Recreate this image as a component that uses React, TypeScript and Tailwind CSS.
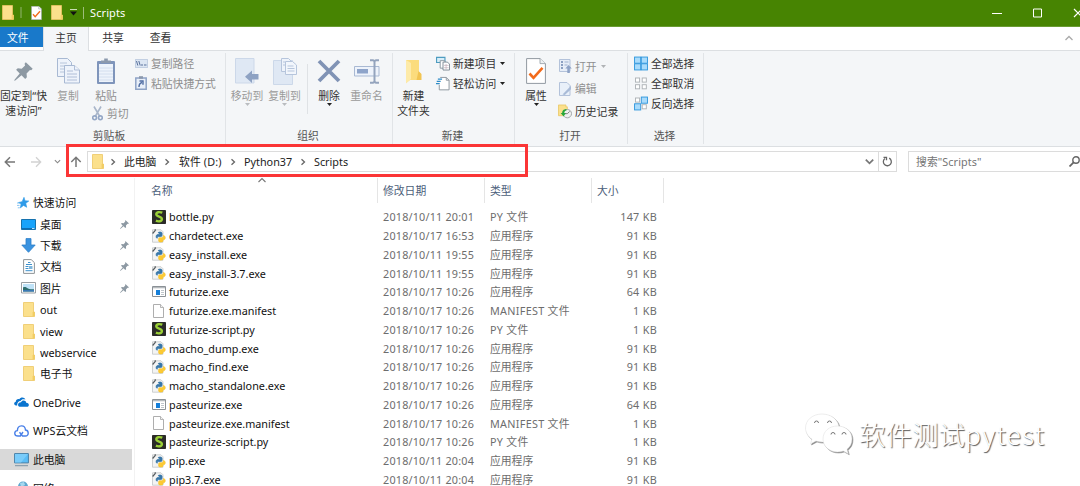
import React from 'react';

type FileKind = 'sublime' | 'python' | 'app' | 'blank';

interface FileRow {
  name: string;
  date: string;
  type: string;
  size: string;
  kind: FileKind;
}

const FILES: FileRow[] = [
  { name: 'bottle.py', date: '2018/10/11 20:01', type: 'PY 文件', size: '147 KB', kind: 'sublime' },
  { name: 'chardetect.exe', date: '2018/10/17 16:53', type: '应用程序', size: '91 KB', kind: 'python' },
  { name: 'easy_install.exe', date: '2018/10/11 19:55', type: '应用程序', size: '91 KB', kind: 'python' },
  { name: 'easy_install-3.7.exe', date: '2018/10/11 19:55', type: '应用程序', size: '91 KB', kind: 'python' },
  { name: 'futurize.exe', date: '2018/10/17 10:26', type: '应用程序', size: '64 KB', kind: 'app' },
  { name: 'futurize.exe.manifest', date: '2018/10/17 10:26', type: 'MANIFEST 文件', size: '1 KB', kind: 'blank' },
  { name: 'futurize-script.py', date: '2018/10/17 10:26', type: 'PY 文件', size: '1 KB', kind: 'sublime' },
  { name: 'macho_dump.exe', date: '2018/10/17 10:26', type: '应用程序', size: '91 KB', kind: 'python' },
  { name: 'macho_find.exe', date: '2018/10/17 10:26', type: '应用程序', size: '91 KB', kind: 'python' },
  { name: 'macho_standalone.exe', date: '2018/10/17 10:26', type: '应用程序', size: '91 KB', kind: 'python' },
  { name: 'pasteurize.exe', date: '2018/10/17 10:26', type: '应用程序', size: '64 KB', kind: 'app' },
  { name: 'pasteurize.exe.manifest', date: '2018/10/17 10:26', type: 'MANIFEST 文件', size: '1 KB', kind: 'blank' },
  { name: 'pasteurize-script.py', date: '2018/10/17 10:26', type: 'PY 文件', size: '1 KB', kind: 'sublime' },
  { name: 'pip.exe', date: '2018/10/11 20:04', type: '应用程序', size: '91 KB', kind: 'python' },
  { name: 'pip3.7.exe', date: '2018/10/11 20:04', type: '应用程序', size: '91 KB', kind: 'python' },
];

/* ---------- icons ---------- */

const Folder: React.FC<{ className?: string }> = ({ className = 'w-[12px] h-[15px]' }) => (
  <svg className={className} viewBox="0 0 12 15" preserveAspectRatio="none">
    <path d="M.5.5h10v9.5h1v4.5H.5z" fill="#fbe08c" stroke="#ecc765" strokeWidth=".8" />
    <path d="M9.6 10h2v4.2h-2z" fill="#f2cd62" />
  </svg>
);

const PinShape: React.FC<{ className: string }> = ({ className }) => (
  <svg className={className} viewBox="0 0 18 18" fill="#8d99a3">
    <path d="M11.2.3l6.5 6.2-1.4 1.3-1.2-.3-3.2 3.4.3 3.6-1.6 1.5-3.5-3.5L1.2 17.6.2 17.8.5 16.7 5.4 11 2 7.4l1.6-1.4 3.7.3 3.2-3.1-.5-1.5z" />
  </svg>
);

const Caret: React.FC<{ color?: string }> = ({ color = '#222' }) => (
  <svg className="w-[5px] h-[3px]" viewBox="0 0 5 3">
    <path d="M0 0h5L2.5 3z" fill={color} />
  </svg>
);

const Chevron: React.FC<{ className: string; d: string; color?: string; width?: number }> = ({ className, d, color = '#666', width = 1.3 }) => (
  <svg className={className} viewBox="0 0 8 8" fill="none" stroke={color} strokeWidth={width}>
    <path d={d} />
  </svg>
);

const PagesIcon = () => (
  <svg className="w-[23px] h-[26px]" viewBox="0 0 23 26" fill="#eef3fb" stroke="#a8b9d3">
    <path d="M.5.5h10l4 4v14h-14z" />
    <path d="M3 5h7M3 8h8M3 11h5M3 14h5" strokeWidth=".8" />
    <path d="M7.5 7.5h10l5 4.5v13h-15z" />
    <path d="M17.5 7.5v4.5h5M10 13h6M10 16h10M10 19h10M10 22h10" strokeWidth=".9" />
  </svg>
);

const ClipboardIcon = () => (
  <svg className="w-[20px] h-[27px]" viewBox="0 0 20 27">
    <rect x="1" y="3" width="18" height="23" rx="1" fill="#7f95bb" />
    <path d="M3 6h14v18H3z" fill="#edf3fb" />
    <path d="M3 10h14M3 13h14M3 16h14M3 19h14M3 22h14" stroke="#d3deee" />
    <path d="M5 5V2.5h3.2V.6h3.6v1.9H15V5z" fill="#8b99ad" />
  </svg>
);

const ScissorsIcon = () => (
  <svg className="w-[11px] h-[15px]" viewBox="0 0 11 15" fill="none" stroke="#94a7c6" strokeWidth="1.6">
    <path d="M2 .5l5.5 9.5M9 .5L3.5 10" stroke="#a9b6ca" />
    <circle cx="2.6" cy="11.8" r="1.9" />
    <circle cx="8.4" cy="11.8" r="1.9" />
  </svg>
);

const PathIcon = () => (
  <svg className="w-[13px] h-[9px]" viewBox="0 0 13 9">
    <path d="M.4.4h12.2v8.2H.4z" fill="#dce6f3" stroke="#b4c3da" strokeWidth=".8" />
    <path d="M1.5 2l1.3 4.5M3.8 2l1.4 4.5M6 6h2M9 6h2.5" stroke="#58709b" strokeWidth="1" fill="none" />
  </svg>
);

const ShortcutIcon = () => (
  <svg className="w-[12px] h-[14px]" viewBox="0 0 12 14">
    <path d="M.8 2h10.4v11.2H.8z" fill="#e8eff9" stroke="#8ea3c6" strokeWidth="1.5" />
    <path d="M4 .2h4v2.5H4z" fill="#8b99ad" />
    <path d="M4 11c0-3 1-4 3-4.5M4.5 5H8v3.8" stroke="#4f6da3" strokeWidth="1.4" fill="none" />
  </svg>
);

const MoveToIcon = () => (
  <svg className="w-[24px] h-[26px]" viewBox="0 0 24 26">
    <path d="M.5.5h18.5v24.5H.5z" fill="#dfe8f4" stroke="#ccd8e9" />
    <path d="M23.5 16v5.5H17V25l-7-6.2 7-6.3V16z" fill="#8ea2c3" />
  </svg>
);

const CopyToIcon = () => (
  <svg className="w-[24px] h-[27px]" viewBox="0 0 24 27" stroke="#b6c5dc">
    <path d="M.5 2.5h19v24H.5z" fill="#dfe8f4" stroke="#ccd8e9" />
    <path d="M8.5.5h7l3 3v10h-10z" fill="#eef3fb" />
    <path d="M12.5 3.5h7l4 3.5v9.5h-11z" fill="#f2f6fc" />
    <path d="M14.5 8h6M14.5 10.5h7M14.5 13h7M10 4h2M10 7h2" />
  </svg>
);

const DeleteIcon = () => (
  <svg className="w-[24px] h-[24px]" viewBox="0 0 24 24" fill="none" stroke="#8093b5" strokeWidth="3.8">
    <path d="M2 2l20 20M22 2L2 22" />
  </svg>
);

const RenameIcon = () => (
  <svg className="w-[26px] h-[25px]" viewBox="0 0 26 25">
    <path d="M.5 7.5h24.5v9.5H.5z" fill="#eef3fb" stroke="#a9b9d3" />
    <path d="M3 10h11v4.5H3z" fill="#8ea4ca" />
    <path d="M16 1.2h3l1.5 1 1.5-1h3M16 23.8h3l1.5-1 1.5 1h3M20.5 2v21" stroke="#94a4bd" strokeWidth="2" fill="none" />
  </svg>
);

const NewFolderIcon = () => (
  <svg className="w-[17px] h-[25px]" viewBox="0 0 17 25">
    <path d="M1 1h13v12l2 2v6H5L1 24z" fill="#fbdc7d" />
    <path d="M1 1l5 3v16l-5 4.5z" fill="#fdeaa8" />
    <path d="M13.5 12l3 3v6h-5z" fill="#f1c452" />
  </svg>
);

const NewItemIcon = () => (
  <svg className="w-[15px] h-[15px]" viewBox="0 0 15 15">
    <path d="M.6.9h9v5.5h-9z" fill="#d7eef9" stroke="#4d9cc0" strokeWidth="1.2" />
    <path d="M4.5 4.5h5v8h-5z" fill="#fff" stroke="#89949e" />
    <path d="M7.5 6h4.500l2.500 2v6.500h-7z" fill="#fff" stroke="#7e8a94" />
    <path d="M8.5 9.5h5M8.5 12h5M10.8 8v6" stroke="#c0a9b4" strokeWidth=".7" />
  </svg>
);

const EasyAccessIcon = () => (
  <svg className="w-[15px] h-[15px]" viewBox="0 0 15 15">
    <path d="M4.5 1h6.5l3 3v10.3H3.5V9" fill="#fff" stroke="#8b959d" />
    <path d="M11 1v3h3" fill="none" stroke="#8b959d" />
    <path d="M2 2.8h4.5M.8 5.2H5M0 7.6h4" stroke="#2e8cc7" strokeWidth="1.4" />
  </svg>
);

const PropertiesIcon: React.FC<{ className?: string }> = ({ className = 'w-[20px] h-[26px]' }) => (
  <svg className={className} viewBox="0 0 20 26">
    <path d="M.6.6h13.4l5.4 5v19.8H.6z" fill="#fff" stroke="#9199a1" />
    <path d="M14 .6v5h5.4" fill="#edf0f2" stroke="#9199a1" strokeWidth=".8" />
    <path d="M3.5 15.5l4 4.3 9-10" fill="none" stroke="#f26a1b" strokeWidth="2.6" />
  </svg>
);

const OpenIcon = () => (
  <svg className="w-[13px] h-[14px]" viewBox="0 0 13 14">
    <path d="M.5.5h10.5v12H.5z" fill="#e6edf7" stroke="#b3c2da" />
    <path d="M2 3h2M2 6h2M2 9h2" stroke="#6d86b1" strokeWidth="1.5" />
    <path d="M5.5 3h4M5.5 6h3" stroke="#9fb1cf" />
    <path d="M9.5 6l3.3 3.6h-2V14H8.3V9.6h-2z" fill="#8da2c6" />
  </svg>
);

const EditIcon = () => (
  <svg className="w-[13px] h-[14px]" viewBox="0 0 13 14">
    <path d="M.5.5H8l3 3v10H.5z" fill="#e9f0f9" stroke="#b3c2da" />
    <path d="M3.5 12.5l8.5-8.8v3.5L5.8 13z" fill="#a9bbd7" />
  </svg>
);

const HistoryIcon = () => (
  <svg className="w-[15px] h-[15px]" viewBox="0 0 15 15">
    <path d="M.5.5h8v2H10v9.5H.5z" fill="#fbe08c" stroke="#e7c45e" strokeWidth=".8" />
    <circle cx="10" cy="9.8" r="4.5" fill="#eef0f0" stroke="#9da3a5" />
    <path d="M7.5 9.8H10L12.5 7.5" fill="none" stroke="#666" strokeWidth=".9" />
    <path d="M9 4.8C5.500 5 4.500 7 4.500 9H2.800L6 12.800 8.500 9H6.800c0-1.500.7-2.500 2.200-2.600z" fill="#27a83b" />
  </svg>
);

const SelectIcon: React.FC<{ mode: 'all' | 'none' | 'invert' }> = ({ mode }) => {
  const cells = [
    { x: 0.6, y: 0.6, on: mode === 'all' },
    { x: 7.8, y: 0.6, on: mode !== 'none' },
    { x: 0.6, y: 7.8, on: mode !== 'none' },
    { x: 7.8, y: 7.8, on: mode === 'all' },
  ];
  return (
    <svg className="w-[15px] h-[15px]" viewBox="0 0 15 15">
      {cells.map((c, i) => c.on
        ? <rect key={i} x={c.x} y={c.y} width="6.6" height="6.6" fill="#a9dbfb" stroke="#3096dc" />
        : <rect key={i} x={c.x + 1} y={c.y + 1} width="4.4" height="4.4" fill="#fff" stroke="#adb2b6" />)}
    </svg>
  );
};

const FileIcon: React.FC<{ kind: FileKind }> = ({ kind }) => {
  if (kind === 'sublime') {
    return (
      <svg className="w-[14px] h-[14px]" viewBox="0 0 14 14">
        <rect width="14" height="14" rx=".8" fill="#2b2b28" />
        <path d="M10.3 2.7C7.5 1.6 4.3 2 4.3 4.3c0 2.7 5.6 2 5.6 4.7 0 2.6-3.5 2.8-6 1.7" fill="none" stroke="#9bd037" strokeWidth="2.4" />
      </svg>
    );
  }
  if (kind === 'app') {
    return (
      <svg className="w-[14px] h-[11px]" viewBox="0 0 14 11">
        <path d="M.5.5h13v10H.5z" fill="#fff" stroke="#8b9196" />
        <path d="M1 1h12v1.3H1z" fill="#b5babd" />
        <path d="M4 4h4v5H4z" fill="#157fd9" />
        <path d="M9 4.5h3M9 6.5h3M9 8.5h3" stroke="#b0b8be" strokeWidth=".8" />
      </svg>
    );
  }
  if (kind === 'blank') {
    return (
      <svg className="w-[11px] h-[14px]" viewBox="0 0 11 14">
        <path d="M.5.5h7l3 3v10H.5z" fill="#fff" stroke="#a5a5a5" strokeWidth=".9" />
        <path d="M7.5.5v3h3" fill="#f2f2f2" stroke="#a5a5a5" strokeWidth=".8" />
      </svg>
    );
  }
  return (
    <svg className="w-[14px] h-[14px]" viewBox="0 0 14 14">
      <path d="M.5.8h8.500l2 2v10.400H.5z" fill="#f3f4f4" stroke="#c2c5c7" strokeWidth=".8" />
      <path d="M.6 4.5L3.8.9M2.6 1.2l1.4-.4" stroke="#545a5e" strokeWidth="1.2" />
      <path d="M6 4c0-1.3 4-1.3 4 0v2.2c0 1.2-1 1.4-2 1.4H6.7C5.5 7.6 5.2 8.3 5.2 9.2c-1.4 0-1.5-3.3.3-3.6h2.7" fill="#3776a8" stroke="#3776a8" strokeWidth=".8" />
      <path d="M11.3 6.5c2.6 0 2.5 4.2.5 4.2H9.5c1.5.2 1.5.4 1.5 1.2 0 1.6-4.4 1.6-4.4 0V10c0-1.2.8-1.3 1.7-1.3h1.5c1.2 0 1.5-.9 1.5-2.2z" fill="#fdcb35" stroke="#f6c22a" strokeWidth=".6" />
    </svg>
  );
};

const StarIcon = () => (
  <svg className="w-[12px] h-[12px]" viewBox="0 0 12 12">
    <path d="M7 .3l1 3.5 3.8.2-3 2.3.9 4-3.2-1.9-3.2 2.5.8-3.9L1.4 5.5l3.7-.8z" fill="#2f9be8" stroke="#2f9be8" strokeWidth=".6" />
    <path d="M0 6h2.5M0 8.4h2.5M.8 10.8h2" stroke="#7cc0f0" strokeWidth=".9" />
  </svg>
);

const DesktopIcon = () => (
  <svg className="w-[15px] h-[11px]" viewBox="0 0 15 11">
    <path d="M.5.5h14v10H.5z" fill="#18a3fb" stroke="#1672ae" />
    <path d="M1 9.5h13" stroke="#0d6db4" />
    <path d="M11 9.5h2.5" stroke="#bde3fb" />
  </svg>
);

const DownloadIcon = () => (
  <svg className="w-[15px] h-[15px]" viewBox="0 0 15 15">
    <path d="M5 .6h5v6.4h4.2L7.5 14.3.8 7H5z" fill="#3a93e0" stroke="#2c7fc8" strokeWidth=".8" />
  </svg>
);

const DocumentIcon = () => (
  <svg className="w-[12px] h-[15px]" viewBox="0 0 12 15">
    <path d="M.6.6h7.6l3.2 3v10.8H.6z" fill="#fff" stroke="#8f9498" />
    <path d="M5 3.5h2.5M3 5.5h6M2.5 7.5h3M2.5 9.5h3M2.5 11.7h7" stroke="#3d91cc" />
    <path d="M6 7h3.5v3H6z" fill="#7fb6dc" />
  </svg>
);

const PictureIcon = () => (
  <svg className="w-[15px] h-[12px]" viewBox="0 0 15 12">
    <path d="M.5.5h14v10.5H.5z" fill="#fff" stroke="#9a9fa3" />
    <path d="M2 2h11v7.5H2z" fill="#bfe2f7" />
    <path d="M2 5.5c2-1 3.5 0 5 1s4 .5 6 .8v2.2H2z" fill="#2e6e6d" />
    <path d="M2 8h11v1.5H2z" fill="#3b78b5" />
  </svg>
);

const OneDriveIcon = () => (
  <svg className="w-[15px] h-[10px]" viewBox="0 0 15 10" fill="#0a74cf">
    <path d="M3.2 8.5H2C-.5 8-.3 5 1.8 4.7 1.8 2.5 4 1.6 5.3 2.3 6.5-.2 10.5-.2 11.4 2.6 8.8 1.8 7.4 2.6 6.6 3.9 4.2 3.9 3 6 3.2 8.5z" />
    <path d="M5.6 9.7C3.2 9.4 3.5 5.3 7 5.3 8 2.7 12 3 12.2 5.8 15.6 5.7 15.5 9.7 13 9.7z" />
  </svg>
);

const WpsCloudIcon = () => (
  <svg className="w-[15px] h-[12px]" viewBox="0 0 15 12" fill="none" stroke="#4a80e8" strokeWidth="1.4">
    <path d="M4 11C-.2 11-.2 6 3.4 5.6 3.6-.5 11-.7 11.5 5 15 5.2 15.2 11 11.5 11H8.5L5.5 7.2" />
    <path d="M4 11h2.3L9 7" />
  </svg>
);

const ComputerIcon = () => (
  <svg className="w-[15px] h-[14px]" viewBox="0 0 15 14">
    <path d="M.6.6h13.8v9.3H.6z" fill="#5bbdf6" stroke="#477fa6" />
    <path d="M1 1h13L7 9.5H1z" fill="#7accfa" />
    <path d="M1 12.6h13" stroke="#8da0ae" strokeWidth="1.3" />
  </svg>
);

const NetworkIcon = () => (
  <svg className="w-[15px] h-[14px]" viewBox="0 0 15 14">
    <circle cx="9" cy="5.5" r="5" fill="#5fa8cf" />
    <path d="M6 2l4-1 1 3-4 2z" fill="#a6d8ef" />
    <path d="M1 7h8v6H1z" fill="#59baf4" stroke="#477fa6" />
  </svg>
);

/* ---------- ribbon ---------- */

const BigButton: React.FC<{ icon: React.ReactNode; lines: string[]; className: string; caret?: string }> = ({ icon, lines, className, caret }) => (
  <div className={`flex shrink-0 flex-col items-center ${className}`}>
    <div className="mt-[5px] mb-[2px] flex h-[30px] items-center">{icon}</div>
    {lines.map(line => <span key={line} className="leading-[15px]">{line}</span>)}
    {caret && <Caret color={caret} />}
  </div>
);

const SmallButton: React.FC<{ icon: React.ReactNode; label: string; className?: string; caret?: string }> = ({ icon, label, className = 'h-[20px]', caret }) => (
  <div className={`flex items-center gap-[3px] ${className}`}>
    <span className="flex w-[14px] shrink-0 justify-center">{icon}</span>
    <span>{label}</span>
    {caret && <span className="ml-px"><Caret color={caret} /></span>}
  </div>
);

const RibbonGroup: React.FC<{ label: string; className: string; labelClass?: string; children: React.ReactNode }> = ({ label, className, labelClass = '', children }) => (
  <div className={`flex shrink-0 flex-col ${className}`}>
    <div className="flex h-[76px]">{children}</div>
    <div className={`mt-[1px] text-center leading-[16px] text-[#555] ${labelClass}`}>{label}</div>
  </div>
);

const Divider = () => <div className="mt-[2px] h-[91px] w-px shrink-0 bg-[#e1e4e7]" />;

const Ribbon = () => (
  <div className="flex h-[96px] shrink-0 border-b border-[#dcdfe2] bg-[#f4f6f8] text-[#333]">
    <RibbonGroup label="剪贴板" className="w-[225px]" labelClass="pr-[7px]">
      <BigButton icon={<PinShape className="h-[19px] w-[19px]" />} lines={['固定到“快', '速访问”']} className="w-[47px] whitespace-nowrap" />
      <BigButton icon={<PagesIcon />} lines={['复制']} className="ml-px w-[40px] text-[#9a9a9a]" />
      <div className="flex flex-col text-[#8f8f8f]">
        <div className="flex h-[53px]">
          <BigButton icon={<ClipboardIcon />} lines={['粘贴']} className="w-[36px]" />
          <div className="ml-[10px] pt-[2px]">
            <SmallButton icon={<PathIcon />} label="复制路径" />
            <SmallButton icon={<ShortcutIcon />} label="粘贴快捷方式" />
          </div>
        </div>
        <SmallButton icon={<ScissorsIcon />} label="剪切" className="ml-[2px] h-[18px]" />
      </div>
    </RibbonGroup>
    <Divider />
    <RibbonGroup label="组织" className="w-[166px]" labelClass="pr-[2px]">
      <BigButton icon={<MoveToIcon />} lines={['移动到']} className="ml-[2px] w-[38px] text-[#9a9a9a]" caret="#b9bcbf" />
      <BigButton icon={<CopyToIcon />} lines={['复制到']} className="w-[37px] text-[#9a9a9a]" caret="#b9bcbf" />
      <div className="mt-[13px] ml-[4px] h-[50px] w-px bg-[#dfe2e5]" />
      <BigButton icon={<DeleteIcon />} lines={['删除']} className="ml-[2px] w-[38px]" caret="#222" />
      <BigButton icon={<RenameIcon />} lines={['重命名']} className="w-[37px] text-[#9a9a9a]" />
    </RibbonGroup>
    <Divider />
    <RibbonGroup label="新建" className="w-[121px]" labelClass="pr-[2px]">
      <BigButton icon={<NewFolderIcon />} lines={['新建', '文件夹']} className="ml-[2px] w-[37px]" />
      <div className="ml-[4px] pt-[2px]">
        <SmallButton icon={<NewItemIcon />} label="新建项目" caret="#222" />
        <SmallButton icon={<EasyAccessIcon />} label="轻松访问" caret="#222" />
      </div>
    </RibbonGroup>
    <Divider />
    <RibbonGroup label="打开" className="w-[112px]" labelClass="pr-[2px]">
      <BigButton icon={<PropertiesIcon />} lines={['属性']} className="ml-[2px] w-[38px]" caret="#222" />
      <div className="ml-[3px] pt-[4px]">
        <SmallButton icon={<OpenIcon />} label="打开" className="h-[22.5px] text-[#8f8f8f]" caret="#b0b3b6" />
        <SmallButton icon={<EditIcon />} label="编辑" className="h-[22.5px] text-[#8f8f8f]" />
        <SmallButton icon={<HistoryIcon />} label="历史记录" className="h-[22.5px]" />
      </div>
    </RibbonGroup>
    <Divider />
    <RibbonGroup label="选择" className="w-[75px]" labelClass="pr-[2px]">
      <div className="ml-[6px] pt-[2px]">
        <SmallButton icon={<SelectIcon mode="all" />} label="全部选择" />
        <SmallButton icon={<SelectIcon mode="none" />} label="全部取消" />
        <SmallButton icon={<SelectIcon mode="invert" />} label="反向选择" />
      </div>
    </RibbonGroup>
    <Divider />
  </div>
);

/* ---------- title, tabs, address ---------- */

const TitleBar = () => (
  <div className="flex h-[27px] shrink-0 items-center border-b border-[#6a9c34] bg-[#478402] pb-px text-white">
    <Folder className="ml-[2px] h-[15px] w-[12px]" />
    <div className="ml-[6px] h-[11px] w-[2px] bg-[#6c9c38]" />
    <PropertiesIcon className="ml-[9px] h-[14px] w-[11px]" />
    <Folder className="ml-[9px] h-[15px] w-[12px]" />
    <svg className="ml-[7px] h-[7px] w-[7px]" viewBox="0 0 7 7">
      <path d="M0 .5h7" stroke="#c9dcb3" />
      <path d="M0 2.5h7L3.5 6.5z" fill="#111" />
    </svg>
    <div className="ml-[6px] h-[12px] w-px bg-[#9dbd7b]" />
    <span className="ml-[6px] text-[11px] tracking-[0.1px]">Scripts</span>
    <svg className="ml-auto h-[10px] w-[88px] shrink-0" viewBox="0 0 88 10" fill="none" stroke="#fff">
      <path d="M0 5.5h10" strokeWidth="1" />
      <path d="M41.5 1h8v8h-8z" />
      <path d="M82 1l8 8M90 1l-8 8" strokeWidth="1.2" />
    </svg>
  </div>
);

const Tabs = () => (
  <div className="flex h-[24px] shrink-0 border-b border-[#dcdfe2] bg-white text-[#333]">
    <div className="flex h-[20px] w-[43px] items-center bg-[#1979ca] pl-[7px] text-white">文件</div>
    <div className="-mb-px flex h-[24px] w-[46px] justify-center border-x border-[#dcdfe2] bg-[#f4f6f8] pt-[3px] leading-[16px]">主页</div>
    <div className="w-[48px] pt-[3px] text-center leading-[16px]">共享</div>
    <div className="w-[47px] pt-[3px] text-center leading-[16px]">查看</div>
    <Chevron className="mt-[7px] mr-[7px] ml-auto h-[8px] w-[8px]" d="M.5 6L4 2.5 7.5 6" color="#aaa" />
  </div>
);

const ARROW = 'M11 6H1.5M6 1.3L1.3 6 6 10.7';

const Crumb = () => <Chevron className="h-[8px] w-[8px] shrink-0" d="M2.5 1.2L5.5 4 2.5 6.8" />;

const AddressBar = () => (
  <div className="flex h-[31px] shrink-0 items-center bg-white pb-[2px] text-[#222]">
    <svg className="ml-[4px] h-[12px] w-[12px]" viewBox="0 0 12 12" fill="none" stroke="#777" strokeWidth="1.5"><path d={ARROW} /></svg>
    <svg className="ml-[14px] h-[12px] w-[12px] rotate-180" viewBox="0 0 12 12" fill="none" stroke="#d2d2d2" strokeWidth="1.3"><path d={ARROW} /></svg>
    <Chevron className="ml-[12px] h-[7px] w-[7px]" d="M1 2.5L4 5.5 7 2.5" color="#888" />
    <svg className="ml-[9px] h-[12px] w-[12px] rotate-90" viewBox="0 0 12 12" fill="none" stroke="#777" strokeWidth="1.5"><path d={ARROW} /></svg>
    <div className="ml-[5px] flex h-[21px] w-[810px] shrink-0 items-center border border-[#dcdcdc] pl-[4px]">
      <Folder />
      <span className="ml-[5px] flex"><Crumb /></span>
      <span className="ml-[7px] w-[33px] whitespace-nowrap">此电脑</span>
      <span className="ml-[6px] flex"><Crumb /></span>
      <span className="ml-[8px] w-[44px] tracking-[0.15px] whitespace-nowrap">软件 (D:)</span>
      <span className="ml-[6px] flex"><Crumb /></span>
      <span className="ml-[7px] w-[48px] whitespace-nowrap">Python37</span>
      <span className="ml-[7px] flex"><Crumb /></span>
      <span className="ml-[7px]">Scripts</span>
      <Chevron className="mr-[4px] ml-auto h-[9px] w-[9px]" d="M.7 2.3L4 5.7 7.3 2.3" width={1.5} color="#777" />
      <div className="flex h-[19px] w-[18px] items-center justify-center border-l border-[#dcdcdc]">
        <svg className="h-[11px] w-[11px]" viewBox="0 0 11 11" fill="none" stroke="#666" strokeWidth="1.3">
          <path d="M7.2 2.2A4 4 0 1 1 3 2.5" />
          <path d="M1.5 1.3h3v3" />
        </svg>
      </div>
    </div>
    <div className="ml-[11px] flex h-[21px] grow items-center border border-r-0 border-[#dcdcdc] pl-[7px] text-[#757575]">
      <span className="tracking-[0.1px]">搜索"Scripts"</span>
      <svg className="ml-auto h-[11px] w-[11px]" viewBox="0 0 11 11" fill="none" stroke="#666" strokeWidth="1.4">
        <circle cx="7" cy="4" r="3.2" />
        <path d="M4.6 6.4L.5 10.5" strokeWidth="1.8" />
      </svg>
    </div>
  </div>
);

/* ---------- sidebar ---------- */

const SideItem: React.FC<{ icon: React.ReactNode; label: string; pinned?: boolean; top?: boolean; selected?: boolean }> = ({ icon, label, pinned, top, selected }) => (
  <div className={`flex h-[21.4px] w-[132px] shrink-0 items-center ${top ? 'pl-[14px]' : 'pl-[21px]'} ${selected ? 'bg-[#d9d9d9]' : ''}`}>
    <span className="flex w-[15px] justify-center">{icon}</span>
    <span className="ml-[4px] whitespace-nowrap">{label}</span>
    {pinned && <PinShape className="mr-[3px] ml-auto h-[9px] w-[9px]" />}
  </div>
);

const Sidebar = () => (
  <div className="flex w-[135px] shrink-0 flex-col border-r border-[#f2f2f2] pt-[14px] text-[#111]">
    <SideItem top icon={<span className="pl-[2px]"><StarIcon /></span>} label="快速访问" />
    <SideItem pinned icon={<DesktopIcon />} label="桌面" />
    <SideItem pinned icon={<DownloadIcon />} label="下载" />
    <SideItem pinned icon={<DocumentIcon />} label="文档" />
    <SideItem pinned icon={<PictureIcon />} label="图片" />
    <SideItem icon={<Folder />} label="out" />
    <SideItem icon={<Folder />} label="view" />
    <SideItem icon={<Folder />} label="webservice" />
    <SideItem icon={<Folder />} label="电子书" />
    <div className="mt-[7px] flex flex-col gap-[7.3px]">
      <SideItem top icon={<OneDriveIcon />} label="OneDrive" />
      <SideItem top icon={<WpsCloudIcon />} label="WPS云文档" />
      <SideItem top selected icon={<ComputerIcon />} label="此电脑" />
      <SideItem top icon={<NetworkIcon />} label="网络" />
    </div>
  </div>
);

/* ---------- file list ---------- */

const FileList = () => (
  <div className="min-w-0 grow">
    <div className="flex h-[25px] text-[#4c607a]">
      <div className="relative flex w-[243px] items-center border-r border-[#e5e5e5] pl-[16px]">
        名称
        <Chevron className="absolute top-[-2px] left-[123px] h-[8px] w-[8px]" d="M.5 6L4 2.5 7.5 6" color="#777" width={1.1} />
      </div>
      <div className="flex w-[107px] items-center border-r border-[#e5e5e5] pl-[5px]">修改日期</div>
      <div className="flex w-[107px] items-center border-r border-[#e5e5e5] pl-[5px]">类型</div>
      <div className="flex w-[72px] items-center border-r border-[#e5e5e5] pl-[5px]">大小</div>
    </div>
    <div className="pt-[4.5px]">
      {FILES.map(file => (
        <div key={file.name} className="flex h-[18.75px] items-center whitespace-nowrap text-[#6d6d6d]">
          <span className="ml-[16px] flex w-[15px] justify-center"><FileIcon kind={file.kind} /></span>
          <span className="ml-[3px] w-[214px] text-[#111]">{file.name}</span>
          <span className="w-[107px] tracking-[0.2px]">{file.date}</span>
          <span className={file.type.includes(' ') ? 'w-[107px] tracking-[0.3px]' : 'w-[107px]'}>{file.type}</span>
          <span className="w-[60px] text-right tracking-[0.3px]">{file.size}</span>
        </div>
      ))}
    </div>
  </div>
);

const Watermark = () => (
  <div className="absolute top-[412px] left-[804px] flex items-center">
    <svg className="h-[44px] w-[52px] shrink-0 drop-shadow-[1px_1px_0.5px_#888]" viewBox="0 0 52 44" fill="#fff" stroke="#ddd" strokeWidth=".5">
      <path d="M18 2C8.5 2 1.5 8.2 1.5 16c0 4.5 2.4 8.5 6.5 11.2L6.5 32l5.5-3c3 1 6 1.3 9 1 9-1 14-7 14-14C35 8.2 27.5 2 18 2z" />
      <path d="M33.5 14C25 14 19 19.5 19 27s6.5 13 14.5 13c2 0 4-.3 5.8-1l5 2.7-1.3-4.4c3.2-2.3 5-6 5-10.3 0-7.5-6-13-14.5-13z" />
      <path d="M10.5 11a2 2 0 0 1 4 0M23.5 11a2 2 0 0 1 4 0M27 22.5a2 2 0 0 1 4 0M38 22.5a2 2 0 0 1 4 0" fill="none" stroke="#777" strokeWidth="1" />
    </svg>
    <span className="ml-[3px] font-['Noto_Sans_CJK_SC',sans-serif] text-[26.5px] leading-[40px] font-light whitespace-nowrap text-white [text-shadow:1px_1px_1px_#555]">
      软件测试<span className="tracking-[1.2px]">pytest</span>
    </span>
  </div>
);

export default function App() {
  return (
    <div className="relative flex h-[486px] w-[1080px] flex-col overflow-hidden bg-white font-['Noto_Sans','Noto_Sans_CJK_SC',sans-serif] text-[10.8px] leading-[15px]">
      <TitleBar />
      <Tabs />
      <Ribbon />
      <AddressBar />
      <div className="flex min-h-0 flex-1">
        <Sidebar />
        <FileList />
      </div>
      <Watermark />
      {/* highlighted path */}
      <div className="absolute top-[144px] left-[66px] h-[33px] w-[462px] border-[3px] border-[#fb3536]" />
    </div>
  );
}
